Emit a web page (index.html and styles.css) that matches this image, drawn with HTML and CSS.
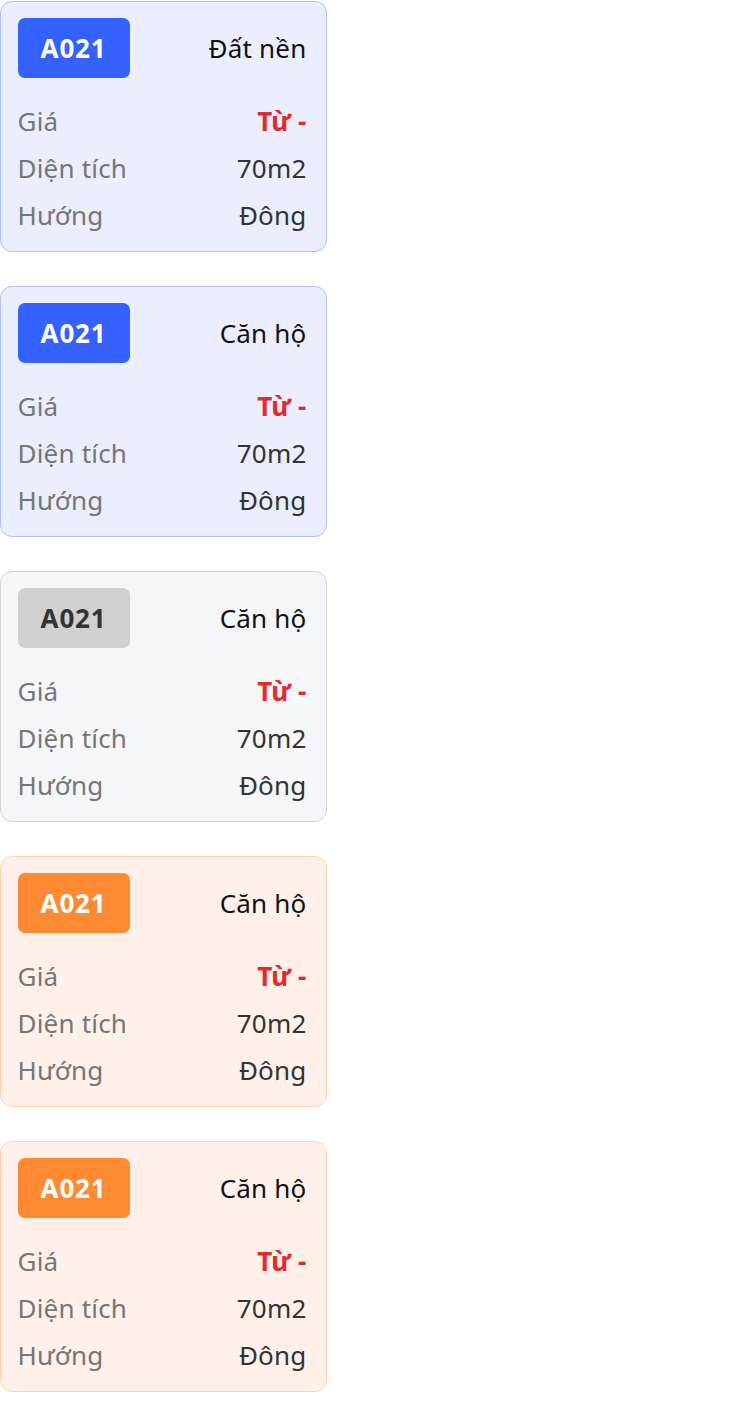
FILE: index.html
```html
<!DOCTYPE html>
<html lang="vi">
<head>
<meta charset="utf-8">
<link rel="stylesheet" href="styles.css">
</head>
<body>
<div class="list">
  <div class="card blue">
    <div class="head"><span class="badge">A021</span><span class="type">Đất nền</span></div>
    <div class="row"><span class="label">Giá</span><span class="price">Từ -</span></div>
    <div class="row"><span class="label">Diện tích</span><span class="value">70m2</span></div>
    <div class="row"><span class="label">Hướng</span><span class="value">Đông</span></div>
  </div>
  <div class="card blue">
    <div class="head"><span class="badge">A021</span><span class="type">Căn hộ</span></div>
    <div class="row"><span class="label">Giá</span><span class="price">Từ -</span></div>
    <div class="row"><span class="label">Diện tích</span><span class="value">70m2</span></div>
    <div class="row"><span class="label">Hướng</span><span class="value">Đông</span></div>
  </div>
  <div class="card grey">
    <div class="head"><span class="badge">A021</span><span class="type">Căn hộ</span></div>
    <div class="row"><span class="label">Giá</span><span class="price">Từ -</span></div>
    <div class="row"><span class="label">Diện tích</span><span class="value">70m2</span></div>
    <div class="row"><span class="label">Hướng</span><span class="value">Đông</span></div>
  </div>
  <div class="card orange">
    <div class="head"><span class="badge">A021</span><span class="type">Căn hộ</span></div>
    <div class="row"><span class="label">Giá</span><span class="price">Từ -</span></div>
    <div class="row"><span class="label">Diện tích</span><span class="value">70m2</span></div>
    <div class="row"><span class="label">Hướng</span><span class="value">Đông</span></div>
  </div>
  <div class="card orange">
    <div class="head"><span class="badge">A021</span><span class="type">Căn hộ</span></div>
    <div class="row"><span class="label">Giá</span><span class="price">Từ -</span></div>
    <div class="row"><span class="label">Diện tích</span><span class="value">70m2</span></div>
    <div class="row"><span class="label">Hướng</span><span class="value">Đông</span></div>
  </div>
</div>
</body>
</html>
```
FILE: styles.css
```css
html, body {
  margin: 0;
  padding: 0;
  background: #ffffff;
}
body {
  font-family: "Noto Sans", "Open Sans", sans-serif;
  font-size: 26px;
  letter-spacing: 0.2px;
  padding-top: 1px;
}
.list {
  display: flex;
  flex-direction: column;
  gap: 34px;
  width: 327px;
}
.card {
  box-sizing: border-box;
  height: 251px;
  border: 1.5px solid #aebfff;
  border-radius: 12px;
  padding: 15.5px 19.5px 12px 16.5px;
  display: flex;
  flex-direction: column;
}
.card.blue { background: #ebeeff; border-color: #afc0ff; }
.card.grey { background: #f4f6fa; border-color: #d0d5dd; }
.card.orange { background: #fff1e9; border-color: #ffd1ad; }
.head {
  display: flex;
  align-items: center;
  justify-content: space-between;
  height: 60px;
  margin-bottom: 20.5px;
}
.badge {
  width: 112px;
  height: 60px;
  border-radius: 7px;
  display: flex;
  align-items: center;
  justify-content: center;
  font-weight: 700;
  letter-spacing: 0.8px;
  color: #ffffff;
  background: #3461ff;
}
.grey .badge { background: #d0d0d0; color: #333333; }
.orange .badge { background: #ff8a31; }
.type { color: #111111; }
.row {
  display: flex;
  justify-content: space-between;
  height: 47px;
  line-height: 47px;
}
.label { color: #767676; }
.value { color: #333333; }
.price { color: #e42a2a; font-weight: 700; }
```
